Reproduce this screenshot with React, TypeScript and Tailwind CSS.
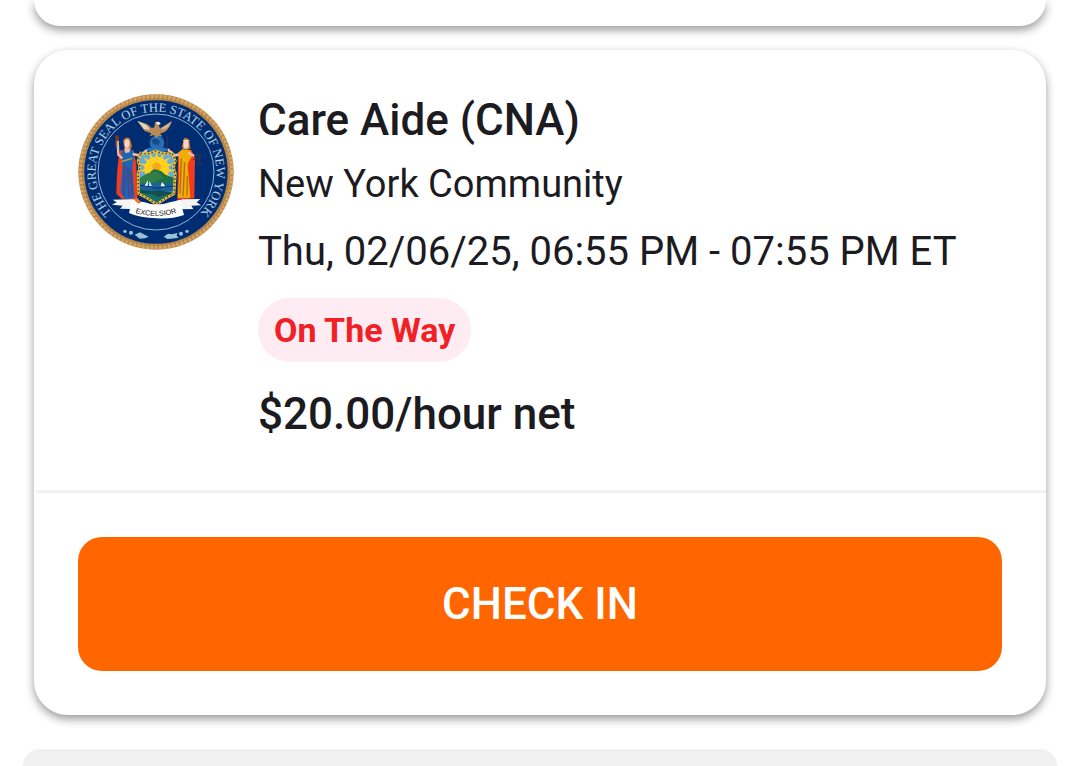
import React from 'react';

type Shift = {
  role: string;
  facility: string;
  time: string;
  status: string;
  rate: string;
};

const shift: Shift = {
  role: 'Care Aide (CNA)',
  facility: 'New York Community',
  time: 'Thu, 02/06/25, 06:55 PM - 07:55 PM ET',
  status: 'On The Way',
  rate: '$20.00/hour net',
};

const sunRays = Array.from({ length: 15 }, (_, i) => i * 24);

const StateSeal = () => (
  <svg
    viewBox="24 25 468 468"
    className="size-[156px] shrink-0"
    role="img"
    aria-label="Seal of the State of New York"
  >
    <defs>
      <path id="sealText" d="M168 416 A181 181 0 1 1 348 416" />
      <path id="mottoText" d="M180 377 Q258 404 336 377" />
      <clipPath id="shieldClip">
        <path d="M212 202 Q236 208 258 196 Q282 208 306 202 L316 226 Q306 244 316 262 L312 324 Q290 334 260 356 Q230 334 206 324 L204 262 Q214 244 204 226Z" />
      </clipPath>
    </defs>

    {/* rope border */}
    <circle cx="258" cy="259" r="224" fill="#002d72" stroke="#b98a4b" strokeWidth="18" />
    <circle cx="258" cy="259" r="227" fill="none" stroke="#d4a566" strokeWidth="10" strokeDasharray="8 5" />
    <circle cx="258" cy="259" r="220" fill="none" stroke="#a07438" strokeWidth="5" strokeDasharray="3 10" />
    <circle cx="258" cy="259" r="174" fill="none" stroke="#8fb4d2" strokeWidth="3" />
    <text
      fill="#b4d2e4"
      fontSize="38"
      className="font-['Liberation_Serif',serif]"
    >
      <textPath href="#sealText" startOffset="50%" textAnchor="middle">
        THE GREAT SEAL OF THE STATE OF NEW YORK
      </textPath>
    </text>

    {/* globe and eagle */}
    <circle cx="261" cy="172" r="22" fill="#286eb4" />
    <path d="M244 164 L256 158 L270 165 L266 178 L250 176Z" fill="#164b87" />
    <path d="M236 186 H288 L298 194 L280 200 H240 L228 192Z" fill="#2874bb" />
    <path
      d="M202 106 L222 112 Q236 116 244 126 L252 126 L256 110 L266 108 L272 114 L266 120 L270 127 Q288 122 306 106 Q300 128 284 139 L270 144 L278 153 L266 150 L258 158 L252 148 L238 152 L244 143 L224 136Z"
      fill="#b58a5c"
    />
    <path d="M203 106 L230 118 L240 132 L222 130Z" fill="#e7d3b5" />
    <path d="M305 107 L282 122 L274 133 L292 127Z" fill="#d7b78e" />
    <path d="M256 110 L266 108 L272 114 L264 118Z" fill="#f6eee2" />

    {/* Liberty */}
    <path d="M150 194 Q140 240 139 324 L156 340 H202 L199 234 L190 194Z" fill="#f33b20" />
    <path d="M154 196 L182 190 L194 202 L187 240 L193 338 L164 340 L151 318 L157 246Z" fill="#1767b5" />
    <path d="M164 238 L162 328 M173 244 L177 336 M181 254 L188 330" stroke="#553e83" strokeWidth="5" fill="none" />
    <path d="M154 228 L187 218" stroke="#d99e26" strokeWidth="4" />
    <path d="M143 165 L145 207 L157 218" stroke="#f2b9af" strokeWidth="7" fill="none" />
    <path d="M188 205 L211 210 L231 193" stroke="#f2b9af" strokeWidth="8" fill="none" />
    <path d="M162 180 L159 164 Q168 150 180 159 L186 181 L181 193 L166 192Z" fill="#b97532" />
    <ellipse cx="171" cy="174" rx="8" ry="13" fill="#ffd0c6" />
    <path d="M162 188 H180 L179 200 L166 202Z" fill="#f5b8af" />
    <path d="M140 183 L139 163" stroke="#a46030" strokeWidth="5" />
    <path d="M134 150 L144 148 L148 157 L139 168Z" fill="#7c3624" />

    {/* Justice */}
    <path d="M324 200 L364 192 L375 218 L373 338 L322 342Z" fill="#f33b20" />
    <path d="M326 200 L338 190 L360 194 L368 208 L353 235 L361 336 H323 L328 268Z" fill="#f0ad08" />
    <path d="M334 218 L330 324 M344 230 L339 332 M352 270 L351 330" stroke="#b66d12" strokeWidth="4" fill="none" />
    <path d="M327 207 L313 209 L292 191" stroke="#f2b9af" strokeWidth="8" fill="none" />
    <path d="M355 201 L373 211" stroke="#f2b9af" strokeWidth="7" fill="none" />
    <path d="M336 184 L341 160 Q349 151 358 164 L361 189 L351 193 L340 194Z" fill="#bd7b2b" />
    <ellipse cx="348" cy="177" rx="8" ry="12" fill="#ffd0c6" />
    <path d="M340 165 H356" stroke="#efe5dc" strokeWidth="4" />
    <path d="M291 151 V196" stroke="#353d5b" strokeWidth="3" />
    <path d="M372 207 H397 M377 207 V224 M389 207 V234 M370 221 H382 M382 234 H399" stroke="#26334d" strokeWidth="4" fill="none" />

    {/* shield */}
    <g clipPath="url(#shieldClip)">
      <rect x="200" y="192" width="120" height="168" fill="#68add8" />
      <circle cx="260" cy="250" r="37" fill="#ffcf21" />
      {sunRays.map((angle) => (
        <path
          key={angle}
          d="M254 222 L260 196 L266 222Z"
          fill="#ffcf21"
          transform={`rotate(${angle} 260 250)`}
        />
      ))}
      <circle cx="260" cy="244" r="13" fill="#f5a814" />
      <path d="M204 282 Q225 264 239 262 Q249 245 264 253 Q276 255 286 267 L316 278 V300 H204Z" fill="#1e7145" />
      <path d="M204 282 Q236 258 260 257 L279 276 L248 293 H204Z" fill="#327e48" />
      <rect x="200" y="292" width="120" height="26" fill="#1863a3" />
      <path d="M204 300 H226 M247 307 H274 M284 302 H312" stroke="#073f76" strokeWidth="4" />
      <path d="M204 310 Q238 320 263 314 L315 321 V360 H200Z" fill="#174e4b" />
      <path d="M216 322 L248 326 L266 335 L297 324 L260 349Z" fill="#13706f" />
      <path d="M234 284 L224 300 H233Z M238 286 V302 H246Z M276 289 L272 302 H286Z" fill="white" />
      <path d="M225 303 H247 M271 305 H287" stroke="#163d5a" strokeWidth="3" />
    </g>
    <path
      d="M212 202 Q236 208 258 196 Q282 208 306 202 L316 226 Q306 244 316 262 L312 324 Q290 334 260 356 Q230 334 206 324 L204 262 Q214 244 204 226Z"
      fill="none"
      stroke="#e5bd35"
      strokeWidth="8"
    />
    <path
      d="M212 202 Q236 208 258 196 Q282 208 306 202 L316 226 Q306 244 316 262 L312 324 Q290 334 260 356 Q230 334 206 324 L204 262 Q214 244 204 226Z"
      fill="none"
      stroke="#25333d"
      strokeWidth="4"
      strokeDasharray="4 7"
    />

    {/* motto ribbon */}
    <path d="M128 342 L202 340 L210 350 L181 370 L150 369 L158 360 L126 357 L140 350Z" fill="#f7f5f2" />
    <path d="M316 346 L338 341 L391 340 L380 350 L393 359 L364 360 L370 370 L338 371Z" fill="#f7f5f2" />
    <path d="M186 344 L224 350 Q260 364 302 349 L330 344 L342 388 Q304 401 260 398 Q211 397 177 382Z" fill="white" />
    <path d="M190 341 L201 336 L214 350 L205 354Z" fill="#ef782b" />
    <text fontSize="22" fill="#111111" className="font-['Liberation_Sans',sans-serif]">
      <textPath href="#mottoText" startOffset="50%" textAnchor="middle">
        EXCELSIOR
      </textPath>
    </text>

    {/* lower ornaments */}
    <g fill="#9bc3d8">
      <circle cx="165" cy="437" r="5" />
      <circle cx="183" cy="441" r="6" />
      <circle cx="333" cy="444" r="6" />
      <circle cx="351" cy="437" r="5" />
      <path d="M194 447 L210 440 L224 447 L236 453 L225 458 L209 459Z" />
      <path d="M281 453 L294 444 L306 446 L322 442 L320 450 L326 456 L303 459 L292 460Z" />
    </g>
  </svg>
);

const ShiftCard = ({ role, facility, time, status, rate }: Shift) => (
  <article className="mx-[34px] mt-6 rounded-[34px] bg-white shadow-[0_4px_10px_rgba(0,0,0,0.4)]">
    <div className="flex items-start gap-6 px-11 pt-11 pb-12">
      <StateSeal />
      <div className="min-w-0 flex-1 whitespace-nowrap">
        <h2 className="text-[44px] leading-[52px] font-medium">{role}</h2>
        <p className="mt-3 text-[38px] leading-[52px]">{facility}</p>
        <p className="mt-4 text-[40px] leading-[52px]">{time}</p>
        <div className="mt-5 flex">
          <span className="rounded-full bg-[#ffebf2] px-4 py-3 text-[34px] leading-[40px] font-bold text-[#f02025]">
            {status}
          </span>
        </div>
        <p className="mt-7 text-[44px] leading-[48px] font-medium">{rate}</p>
      </div>
    </div>
    <hr className="mt-1 ml-[2px] border-t-[3px] border-[#f2f2f2]" />
    <div className="px-11 pt-11 pb-11">
      <button
        type="button"
        className="h-[134px] w-full rounded-3xl bg-[#ff6600] text-[44px] leading-[52px] font-medium text-white"
      >
        CHECK IN
      </button>
    </div>
  </article>
);

const App = () => (
  <main className="overflow-hidden bg-white font-['Roboto',sans-serif] text-[#1c1b1f]">
    <div className="mx-[34px] h-[26px] rounded-b-[34px] bg-white shadow-[0_4px_10px_rgba(0,0,0,0.4)]" />
    <ShiftCard {...shift} />
    <div className="mx-[23px] mt-[34px] h-[17px] rounded-t-[20px] bg-[#f0f0f0]" />
  </main>
);

export default App;
